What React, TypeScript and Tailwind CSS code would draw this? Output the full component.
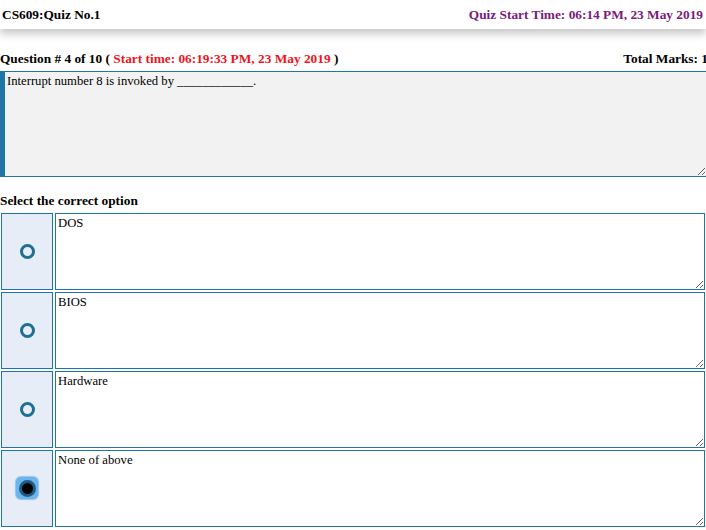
import React from 'react';

const options = [
  { label: 'DOS', selected: false },
  { label: 'BIOS', selected: false },
  { label: 'Hardware', selected: false },
  { label: 'None of above', selected: true },
];

function Radio({ selected }: { selected: boolean }) {
  if (selected) {
    return (
      <span className="flex h-[22px] w-[22px] items-center justify-center rounded-[5px] bg-[#6db3ec] shadow-[0_0_1px_1px_rgba(109,179,236,0.7)]">
        <span className="flex h-[17px] w-[17px] items-center justify-center rounded-full bg-[#1b5f86]">
          <span className="h-[11px] w-[11px] rounded-full bg-black" />
        </span>
      </span>
    );
  }
  return <span className="h-[15px] w-[15px] rounded-full border-[3px] border-[#1f6f94]" />;
}

export default function App() {
  return (
    <main
      className="relative w-[706px] h-[530px] overflow-hidden bg-white text-black"
      style={{ fontFamily: '"Liberation Serif", "Times New Roman", serif' }}
    >
      {/* Header */}
      <header className="relative z-10 flex h-[29px] items-center justify-between bg-white px-[2px] shadow-[0_5px_8px_rgba(0,0,0,0.22)]">
        <span className="text-[13.33px] font-bold">CS609:Quiz No.1</span>
        <span className="pr-[1px] text-[13.33px] font-bold text-[#7a1a7a]">
          Quiz Start Time: 06:14 PM, 23 May 2019
        </span>
      </header>

      {/* Question */}
      <div className="mt-[20px] flex items-center justify-between text-[13.33px] font-bold">
        <span>
          Question # 4 of 10 ( <span className="text-[#f0141e]">Start time: 06:19:33 PM, 23 May 2019</span> )
        </span>
        <span className="mr-[-2px]">Total Marks: 1</span>
      </div>
      <textarea
        readOnly
        defaultValue="Interrupt number 8 is invoked by ____________."
        className="mt-[2px] block h-[106px] w-[706px] border-y border-l-[5px] border-r-0 border-[#1f75a5] bg-[#f2f2f2] px-[2px] py-[2px] text-[12.67px] leading-[14px] outline-none"
        style={{ fontFamily: '"Liberation Serif", "Times New Roman", serif' }}
      />

      <div className="mt-[14px] text-[13.33px] font-bold">Select the correct option</div>

      {/* Options */}
      <div className="mt-[2px] flex flex-col gap-[2px] pl-[1px]">
        {options.map((o) => (
          <div key={o.label} className="flex gap-[2px]">
            <div className="flex h-[77px] w-[52px] items-center justify-center border border-[#1f75a5] bg-[#e6edf7]">
              <Radio selected={o.selected} />
            </div>
            <textarea
              readOnly
              defaultValue={o.label}
              className="block h-[77px] w-[650px] border border-[#1f75a5] bg-white px-[2px] py-[2px] text-[12.67px] leading-[14px] outline-none"
              style={{ fontFamily: '"Liberation Serif", "Times New Roman", serif' }}
            />
          </div>
        ))}
      </div>
    </main>
  );
}
